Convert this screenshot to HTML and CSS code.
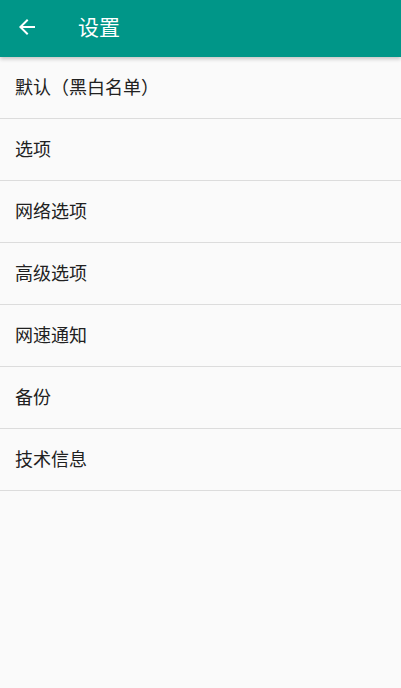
FILE: index.html
```html
<!DOCTYPE html>
<html lang="zh-CN">
<head>
<meta charset="utf-8">
<link rel="stylesheet" href="styles.css">
</head>
<body>
<header class="toolbar">
  <svg class="back" viewBox="0 0 24 24" width="24" height="24"><path d="M20 11H7.83l5.59-5.59L12 4l-8 8 8 8 1.41-1.41L7.83 13H20v-2z" fill="#fff"/></svg>
  <h1 class="title">设置</h1>
</header>
<ul class="list">
  <li class="item">默认（黑白名单）</li>
  <li class="item">选项</li>
  <li class="item">网络选项</li>
  <li class="item">高级选项</li>
  <li class="item">网速通知</li>
  <li class="item">备份</li>
  <li class="item">技术信息</li>
</ul>
</body>
</html>
```
FILE: styles.css
```css
html, body {
  margin: 0;
  padding: 0;
  background: #fafafa;
  height: 100%;
  font-family: "Noto Sans CJK SC", "Noto Sans", sans-serif;
}
.toolbar {
  height: 57px;
  background: #009688;
  display: flex;
  align-items: center;
  box-shadow: 0 2px 4px rgba(0,0,0,0.22);
  position: relative;
  z-index: 1;
}
.back {
  margin-left: 15px;
  margin-top: -3px;
  flex: none;
}
.title {
  margin: -4px 0 0 39px;
  color: #fff;
  font-size: 21px;
  font-weight: 400;
  line-height: 1;
}
.list {
  list-style: none;
  margin: 0;
  padding: 0;
}
.item {
  height: 57px;
  padding-bottom: 4px;
  border-bottom: 1px solid #dcdcdc;
  display: flex;
  align-items: center;
  padding-left: 15px;
  font-size: 18px;
  color: #212121;
}
```
